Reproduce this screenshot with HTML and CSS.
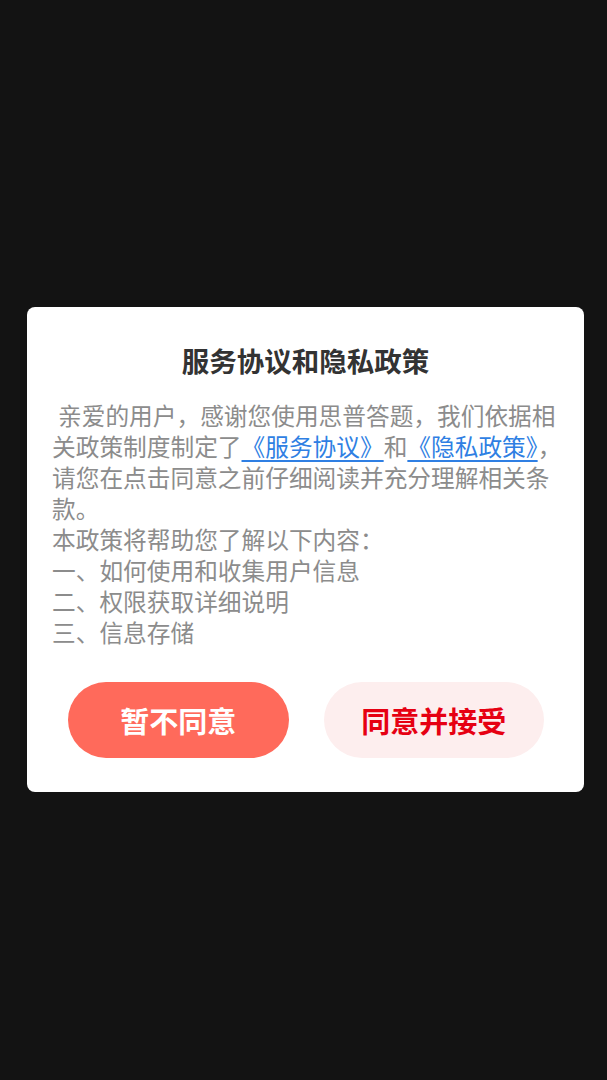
FILE: index.html
```html
<!DOCTYPE html>
<html lang="zh-CN">
<head>
    <meta charset="UTF-8">
    <meta name="viewport" content="width=device-width, initial-scale=1.0">
    <title>服务协议和隐私政策</title>
    <link rel="stylesheet" href="styles.css">
</head>
<body>
    <div class="mask">
        <div class="dialog">
            <h2 class="dialog_title">服务协议和隐私政策</h2>
            <div class="dialog_content">
                <p class="dialog_text">亲爱的用户，感谢您使用思普答题，我们依据相关政策制度制定了<a class="dialog_link" href="#">《服务协议》</a>和<a class="dialog_link" href="#">《隐私政策》</a>，请您在点击同意之前仔细阅读并充分理解相关条款。</p>
                <p class="dialog_line">本政策将帮助您了解以下内容：</p>
                <p class="dialog_line">一、如何使用和收集用户信息</p>
                <p class="dialog_line">二、权限获取详细说明</p>
                <p class="dialog_line">三、信息存储</p>
            </div>
            <div class="dialog_buttons">
                <button class="dialog_button refuse">暂不同意</button>
                <button class="dialog_button agree">同意并接受</button>
            </div>
        </div>
    </div>
</body>
</html>
```

FILE: styles.css
```css
body{
    margin: 0px;
    padding: 0px;
    background-color: #131313;
    font-family: "Noto Sans CJK SC", "Noto Sans", sans-serif;
}
.mask{
    min-height: 1080px;
    padding-top: 307px;
    box-sizing: border-box;
}
.dialog{
    width: 557px;
    margin-left: 27px;
    background-color: white;
    border-radius: 8px;
    padding: 34px 0px 34px 0px;
    box-sizing: border-box;
}
.dialog_title{
    margin: 0px;
    text-align: center;
    font-size: 27.5px;
    line-height: 38px;
    font-weight: 700;
    color: #333333;
}
.dialog_content{
    margin-top: 21px;
    padding: 0px 20px 0px 25px;
    font-size: 23.7px;
    line-height: 31px;
    color: #8c8c8c;
}
.dialog_text{
    margin: 0px;
    text-indent: 6px;
}
.dialog_line{
    margin: 0px;
}
.dialog_link{
    color: #2f7fe3;
    text-decoration: underline;
    text-underline-offset: 4px;
}
.dialog_buttons{
    display: flex;
    gap: 35px;
    margin-top: 34px;
    padding: 0px 40px 0px 41px;
}
.dialog_button{
    flex: 1;
    height: 76px;
    border: none;
    border-radius: 38px;
    font-family: inherit;
    font-size: 29px;
    font-weight: 700;
    cursor: pointer;
}
.refuse{
    background-color: #ff6a5b;
    color: white;
}
.agree{
    background-color: #fdeeee;
    color: #e60012;
}
```
